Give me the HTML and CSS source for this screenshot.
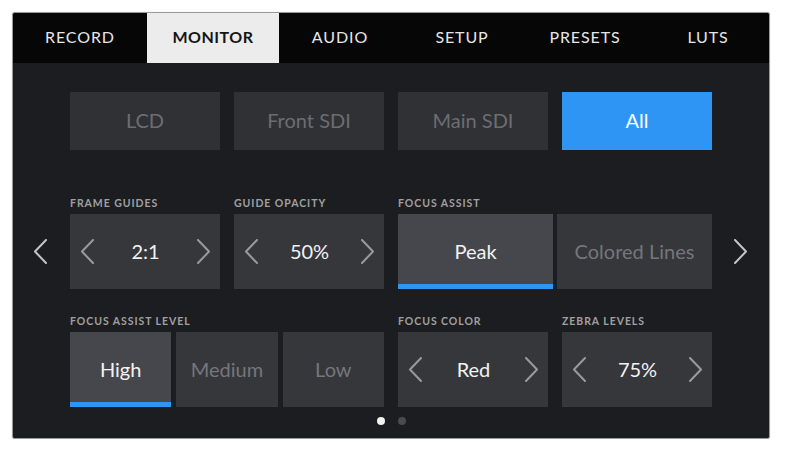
FILE: index.html
```html
<!DOCTYPE html>
<html>
<head>
<meta charset="utf-8">
<link rel="stylesheet" href="styles.css">
</head>
<body>
<div class="panel">
  <nav class="tabs">
    <div class="tab w134">RECORD</div>
    <div class="tab w132 active">MONITOR</div>
    <div class="tab w122">AUDIO</div>
    <div class="tab w122">SETUP</div>
    <div class="tab w124">PRESETS</div>
    <div class="tab w122">LUTS</div>
  </nav>
  <main class="content">
    <div class="grid row1">
      <div class="btn c2">LCD</div>
      <div class="btn c3">Front SDI</div>
      <div class="btn c4">Main SDI</div>
      <div class="btn c5 on">All</div>
    </div>
    <div class="grid row2">
      <div class="nav nav-left c1">
        <svg class="chev outer" viewBox="0 0 15 25"><polyline points="13,1 2,12.5 13,24"/></svg>
      </div>
      <div class="field c2">
        <div class="label">FRAME GUIDES</div>
        <div class="box stepper">
          <svg class="chev" viewBox="0 0 15 25"><polyline points="13,1 2,12.5 13,24"/></svg>
          <span class="val">2:1</span>
          <svg class="chev" viewBox="0 0 15 25"><polyline points="2,1 13,12.5 2,24"/></svg>
        </div>
      </div>
      <div class="field c3">
        <div class="label">GUIDE OPACITY</div>
        <div class="box stepper">
          <svg class="chev" viewBox="0 0 15 25"><polyline points="13,1 2,12.5 13,24"/></svg>
          <span class="val">50%</span>
          <svg class="chev" viewBox="0 0 15 25"><polyline points="2,1 13,12.5 2,24"/></svg>
        </div>
      </div>
      <div class="field c45">
        <div class="label">FOCUS ASSIST</div>
        <div class="seg seg2">
          <div class="box opt sel">Peak</div>
          <div class="box opt">Colored Lines</div>
        </div>
      </div>
      <div class="nav nav-right c6">
        <svg class="chev outer" viewBox="0 0 15 25"><polyline points="2,1 13,12.5 2,24"/></svg>
      </div>
    </div>
    <div class="grid row3">
      <div class="field c23">
        <div class="label">FOCUS ASSIST LEVEL</div>
        <div class="seg seg3">
          <div class="box opt sel">High</div>
          <div class="box opt">Medium</div>
          <div class="box opt">Low</div>
        </div>
      </div>
      <div class="field c4">
        <div class="label">FOCUS COLOR</div>
        <div class="box stepper">
          <svg class="chev" viewBox="0 0 15 25"><polyline points="13,1 2,12.5 13,24"/></svg>
          <span class="val">Red</span>
          <svg class="chev" viewBox="0 0 15 25"><polyline points="2,1 13,12.5 2,24"/></svg>
        </div>
      </div>
      <div class="field c5">
        <div class="label">ZEBRA LEVELS</div>
        <div class="box stepper">
          <svg class="chev" viewBox="0 0 15 25"><polyline points="13,1 2,12.5 13,24"/></svg>
          <span class="val">75%</span>
          <svg class="chev" viewBox="0 0 15 25"><polyline points="2,1 13,12.5 2,24"/></svg>
        </div>
      </div>
    </div>
    <div class="dots">
      <span class="dot cur"></span>
      <span class="dot"></span>
    </div>
  </main>
</div>
</body>
</html>
```

FILE: styles.css
```css
* { box-sizing: border-box; }
html, body { margin: 0; padding: 0; background: #ffffff; }
body {
  font-family: Lato, "Open Sans", sans-serif;
  padding: 12px 0 0 12px;
}
.panel {
  width: 758px;
  height: 427px;
  border: 1px solid #9a9a9a;
  border-radius: 3px;
  background: #1c1d20;
  overflow: hidden;
  display: flex;
  flex-direction: column;
  box-shadow: 0 0 1px rgba(0,0,0,0.3);
}
.tabs {
  display: flex;
  height: 50px;
  background: #060606;
  flex: none;
}
.tab {
  display: flex;
  align-items: center;
  justify-content: center;
  padding-bottom: 3px;
  color: #e6e6e6;
  font-size: 16px;
  font-weight: 400;
  letter-spacing: 0.9px;
}
.tab.active { background: #ececec; color: #151515; font-weight: 700; letter-spacing: 0.5px; }
.w134 { width: 134px; }
.w132 { width: 132px; }
.w122 { width: 122px; }
.w124 { width: 124px; }

.content {
  flex: 1;
  display: flex;
  flex-direction: column;
  background: #1c1d20;
}
.grid {
  display: grid;
  grid-template-columns: 43px repeat(4, 150px) 43px;
  column-gap: 14px;
}
.c1 { grid-column: 1; }
.c2 { grid-column: 2; }
.c3 { grid-column: 3; }
.c4 { grid-column: 4; }
.c5 { grid-column: 5; }
.c6 { grid-column: 6; }
.c45 { grid-column: 4 / 6; }
.c23 { grid-column: 2 / 4; }

.row1 { margin-top: 29px; }
.btn {
  height: 58px;
  background: #303135;
  color: #6c6d71;
  font-size: 20px;
  display: flex;
  align-items: center;
  justify-content: center;
  padding-bottom: 3px;
}
.btn.on { background: #2f95f4; color: #ffffff; }

.row2 { margin-top: 47px; }
.row3 { margin-top: 26px; }

.field { display: flex; flex-direction: column; }
.label {
  height: 13px;
  line-height: 13px;
  margin-bottom: 4px;
  font-size: 10.5px;
  font-weight: 700;
  letter-spacing: 0.95px;
  color: #a0a0a0;
}
.box {
  height: 75px;
  background: #36373b;
  display: flex;
  align-items: center;
  font-size: 20px;
}
.stepper {
  justify-content: space-between;
  padding: 0 9px 0 10px;
  color: #f2f2f2;
}
.val { flex: 1; text-align: center; padding-bottom: 2px; }
.chev {
  width: 15px;
  height: 25px;
  flex: none;
  fill: none;
  stroke: #9a9a9c;
  stroke-width: 2;
  stroke-linecap: round;
  stroke-linejoin: round;
}
.chev.outer { stroke: #c4c4c4; }

.nav {
  display: flex;
  align-items: center;
  padding-top: 17px;
}
.nav-left { justify-content: flex-end; padding-right: 8px; }
.nav-right { justify-content: flex-start; padding-left: 7px; }

.seg { display: flex; }
.seg2 { gap: 4px; }
.seg3 { gap: 5px; }
.opt {
  flex: 1;
  justify-content: center;
  color: #75767a;
  position: relative;
  padding-bottom: 2px;
}
.opt.sel {
  background: #46474c;
  color: #f2f2f2;
}
.opt.sel::after {
  content: "";
  position: absolute;
  left: 0;
  right: 0;
  bottom: 0;
  height: 5px;
  background: #2f95f4;
}

.dots {
  display: flex;
  justify-content: center;
  gap: 13px;
  margin-top: 10px;
  padding-left: 0;
}
.dot {
  width: 8px;
  height: 8px;
  border-radius: 50%;
  background: #4a4b4f;
}
.dot.cur { background: #f2f2f2; }
```
